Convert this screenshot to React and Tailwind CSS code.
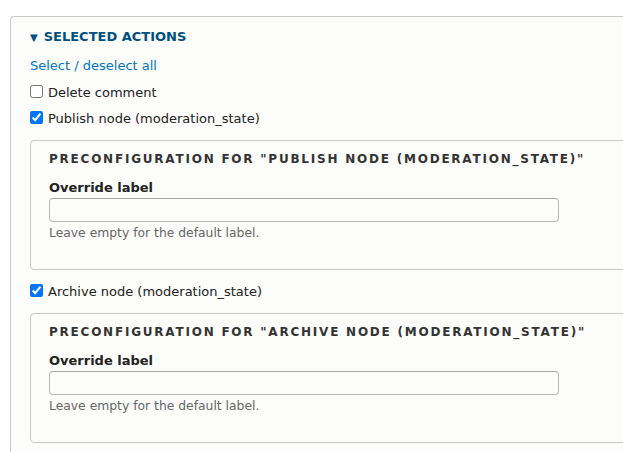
import React from 'react';

// Một khối cấu hình con cho từng action đã chọn
function Preconfig({ name }) {
  return (
    <div className="mt-[13px] w-[640px] border border-[#c9c9c7] rounded-sm bg-[#fcfcfa] pl-[18px] pt-[10px] pb-[28px]">
      <div className="text-[12px] leading-4 font-bold uppercase tracking-[0.148em] text-[#333]">
        Preconfiguration for "{name}"
      </div>
      <div className="mt-3 text-[13px] leading-[18px] font-bold text-[#222]">Override label</div>
      <input
        type="text"
        className="mt-[1px] block w-[510px] h-6 border border-[#b8b8b6] border-t-[#a5a5a3] rounded-sm bg-[#fcfcfa] px-2 text-[13px] outline-none"
      />
      <div className="mt-[3px] text-[12.35px] leading-4 text-[#666]">Leave empty for the default label.</div>
    </div>
  );
}

function Check({ label, checked, className = '' }) {
  return (
    <label className={`flex items-center h-5 text-[13px] text-[#222] ${className}`}>
      <input type="checkbox" defaultChecked={checked} className="m-0 mr-[5px] w-[13px] h-[13px]" />
      <span className="pt-[4px]">{label}</span>
    </label>
  );
}

export default function App() {
  return (
    <div
      className="h-[452px] w-[623px] overflow-hidden bg-white"
      style={{ fontFamily: '"DejaVu Sans", Verdana, sans-serif' }}
    >
      <div className="ml-[10px] mt-[16px] w-[660px] h-[460px] border-l border-t border-[#c9c9c7] rounded-tl-sm bg-[#fcfcfa] pl-[19px] pt-[11px]">
        <div className="flex items-center h-[18px] text-[13px] font-bold uppercase text-[#004f80]">
          <span className="text-[10px] mr-[6px]">▼</span>
          Selected actions
        </div>
        <div className="mt-[11px] h-[18px] leading-[18px] text-[13px] text-[#0074bd]">Select / deselect all</div>
        <Check className="mt-[6px]" label="Delete comment" />
        <Check className="mt-[6px]" label="Publish node (moderation_state)" checked />
        <div className="mt-[1px]">
          <Preconfig name="Publish node (moderation_state)" />
        </div>
        <Check className="mt-[10px]" label="Archive node (moderation_state)" checked />
        <Preconfig name="Archive node (moderation_state)" />
      </div>
    </div>
  );
}
